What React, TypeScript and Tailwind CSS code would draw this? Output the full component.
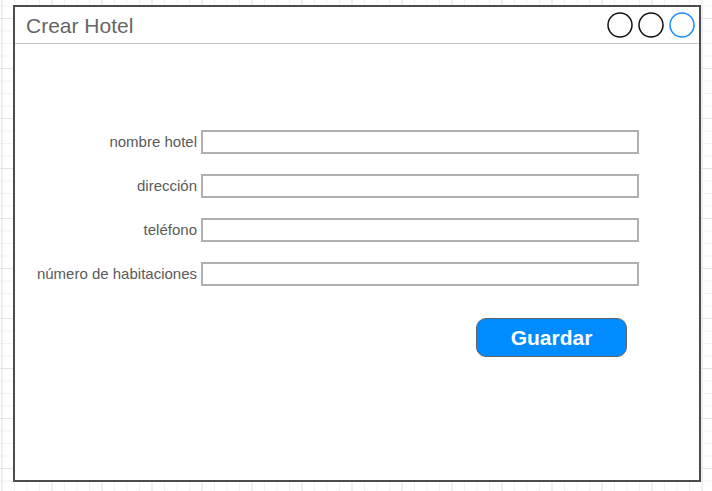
const fields = ['nombre hotel', 'dirección', 'teléfono', 'número de habitaciones']

function WindowButton({ color }: { color: string }) {
  return (
    <svg width="26" height="26" viewBox="0 0 26 26" className="block">
      <circle cx="13" cy="13" r="12" fill="none" stroke={color} strokeWidth="1.5" />
    </svg>
  )
}

export default function App() {
  return (
    <div
      className="h-[491px] w-[712px] overflow-hidden bg-white pt-[5px] pl-[13px] font-['Liberation_Sans',Arial,sans-serif] bg-[linear-gradient(to_right,#e4e4e4_1px,transparent_1px),linear-gradient(to_bottom,#e4e4e4_1px,transparent_1px),linear-gradient(to_right,#f2f2f2_1px,transparent_1px),linear-gradient(to_bottom,#f2f2f2_1px,transparent_1px)] bg-[size:50px_50px,50px_50px,12.5px_12.5px,12.5px_12.5px] bg-[position:1.5px_18px]"
    >
      <div className="flex h-[477px] w-[688px] flex-col border-2 border-[#4d4d4d] bg-white">
        <div className="flex h-[37px] shrink-0 items-center justify-between border-b border-[#c4c4c4] pr-[4px] pl-[11px]">
          <span className="text-[21px] leading-none text-[#666]">Crear Hotel</span>
          <div className="flex items-center gap-[5px]">
            <WindowButton color="#111" />
            <WindowButton color="#111" />
            <WindowButton color="#1a8cff" />
          </div>
        </div>

        <div className="flex flex-col pt-[86px]">
          <div className="flex flex-col gap-[20px]">
            {fields.map((f) => (
              <div key={f} className="flex items-center">
                <label className="w-[182px] -translate-y-px text-right text-[15px] leading-none text-[#5a5a5a]">
                  {f}
                </label>
                <div className="ml-[4px] h-[24px] w-[438px] border-2 border-[#b0b0b0] bg-white" />
              </div>
            ))}
          </div>

          <div className="mt-[32px] pl-[461px]">
            <button
              type="button"
              className="flex h-[39px] w-[151px] items-center justify-center rounded-[10px] border border-[#666] bg-[#008cff] text-[21px] font-bold leading-none text-white"
            >
              Guardar
            </button>
          </div>
        </div>
      </div>
    </div>
  )
}
